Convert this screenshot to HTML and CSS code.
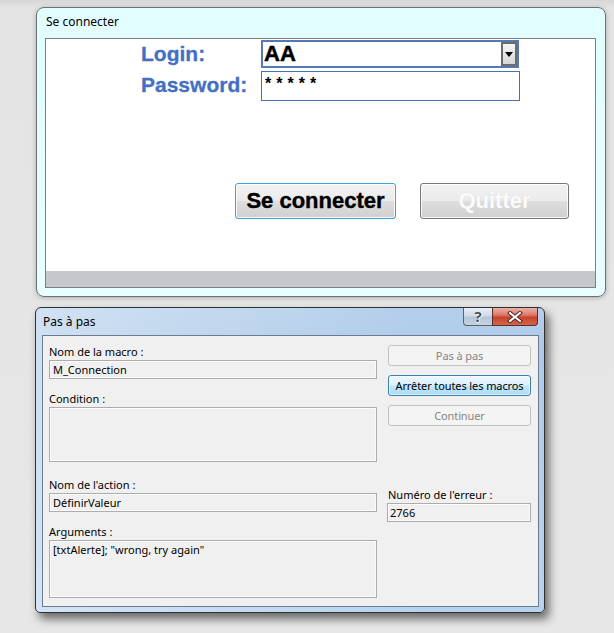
FILE: index.html
```html
<!DOCTYPE html>
<html lang="fr">
<head>
<meta charset="utf-8">
<title>Se connecter</title>
<link rel="stylesheet" href="styles.css">
</head>
<body>
<div class="page">
  <div class="win1">
    <div class="win1-title">Se connecter</div>
    <div class="client">
      <div class="form">
        <div class="lbl lbl-login">Login:</div>
        <div class="combo">
          <span class="combo-val">AA</span>
          <span class="dd"><svg width="8" height="5" viewBox="0 0 8 5"><path d="M0 0h8L4 5z" fill="#000"/></svg></span>
        </div>
        <div class="lbl lbl-pass">Password:</div>
        <div class="pass">* * * * *</div>
      </div>
      <div class="actions">
        <div class="btn btn-connect">Se connecter</div>
        <div class="btn btn-quit">Quitter</div>
      </div>
      <div class="statusbar"></div>
    </div>
  </div>

  <div class="win2">
    <div class="titlebar">
      <div class="title2">Pas à pas</div>
      <div class="tb-help">?</div>
      <div class="tb-close"><svg width="16" height="12" viewBox="0 0 16 12"><path d="M3 2L13 10M13 2L3 10" stroke="#4a2620" stroke-width="4" stroke-linecap="square"/><path d="M3 2L13 10M13 2L3 10" stroke="#fff" stroke-width="2" stroke-linecap="square"/></svg></div>
    </div>
    <div class="content">
      <div class="col-left">
        <div class="flabel l1">Nom de la macro :</div>
        <div class="field">M_Connection</div>
        <div class="flabel l2">Condition :</div>
        <div class="field area area1"></div>
        <div class="flabel l3">Nom de l'action :</div>
        <div class="field">DéfinirValeur</div>
        <div class="flabel l4">Arguments :</div>
        <div class="field area area2">[txtAlerte]; "wrong, try again"</div>
      </div>
      <div class="col-right">
        <div class="sbtn disabled">Pas à pas</div>
        <div class="sbtn active">Arrêter toutes les macros</div>
        <div class="sbtn disabled">Continuer</div>
        <div class="flabel l5">Numéro de l'erreur :</div>
        <div class="field err">2766</div>
      </div>
    </div>
  </div>
</div>
</body>
</html>
```

FILE: styles.css
```css
html, body {
  margin: 0;
  padding: 0;
}
body {
  width: 614px;
  height: 633px;
  overflow: hidden;
  background: linear-gradient(#d6d6d6, #e4e4e4 8px, #e7e7e7);
  font-family: "Noto Sans", "Open Sans", sans-serif;
  color: #000;
}
.page {
  padding-top: 7px;
}

/* ---------- top window ---------- */
.win1 {
  margin-left: 36px;
  width: 570px;
  height: 290px;
  box-sizing: border-box;
  border: 1px solid #6c7272;
  border-radius: 8px;
  background: linear-gradient(#e2fdfd, #e9fefe);
  padding: 0 9px 8px 8px;
  display: flex;
  flex-direction: column;
  box-shadow: 0 1px 5px rgba(0, 0, 0, 0.25);
}
.win1-title {
  height: 30px;
  line-height: 28px;
  font-size: 12px;
  padding-left: 1px;
}
.client {
  flex: 1;
  border: 1px solid #7b7f7f;
  background: #fff;
  display: flex;
  flex-direction: column;
}
.form {
  display: grid;
  grid-template-columns: 120px 260px;
  row-gap: 3px;
  margin-left: 95px;
  padding-top: 1px;
}
.lbl {
  font-family: "Liberation Sans", Arial, sans-serif;
  font-weight: bold;
  font-size: 21px;
  color: #4470c2;
  line-height: 24px;
  -webkit-text-stroke: 0.3px #4470c2;
}
.lbl-login {
  align-self: center;
}
.lbl-pass {
  margin-top: 2px;
}
.combo {
  width: 258px;
  height: 28px;
  box-sizing: border-box;
  border: 2px solid #5578b6;
  display: flex;
  align-items: center;
  justify-content: space-between;
}
.combo-val {
  font-family: "Liberation Sans", Arial, sans-serif;
  font-weight: bold;
  font-size: 22px;
  line-height: 24px;
  padding-left: 1px;
  -webkit-text-stroke: 0.5px #000;
}
.dd {
  width: 16px;
  height: 24px;
  box-sizing: border-box;
  border: 2px solid #6c6c6c;
  background: linear-gradient(#f6f6f6, #e6e6e6 50%, #d6d6d6);
  display: flex;
  align-items: center;
  justify-content: center;
}
.pass {
  width: 259px;
  height: 30px;
  box-sizing: border-box;
  border: 1px solid #4a6eb2;
  font-family: "Liberation Sans", Arial, sans-serif;
  font-weight: bold;
  font-size: 16px;
  line-height: 18px;
  padding: 3px 0 0 3px;
  letter-spacing: 0.3px;
}
.actions {
  display: flex;
  gap: 24px;
  margin: 82px 0 0 189px;
}
.btn {
  height: 36px;
  box-sizing: border-box;
  border-radius: 3px;
  font-family: "Liberation Sans", Arial, sans-serif;
  font-weight: bold;
  font-size: 22px;
  line-height: 34px;
  text-align: center;
  background: linear-gradient(#f2f2f2, #ebebeb 48%, #dddddd 52%, #d0d0d0);
  box-shadow: inset 0 0 0 1px rgba(255, 255, 255, 0.8);
}
.btn-connect {
  width: 161px;
  border: 1px solid #38a8dc;
  color: #000;
  -webkit-text-stroke: 0.4px #000;
}
.btn-quit {
  width: 149px;
  border: 1px solid #777;
  color: #fbfbfb;
  text-shadow: 0 0 1px rgba(200, 200, 200, 0.6);
}
.statusbar {
  margin-top: auto;
  height: 16px;
  background: #c6c7cb;
}

/* ---------- bottom dialog ---------- */
.win2 {
  margin: 10px 0 0 35px;
  width: 510px;
  height: 306px;
  box-sizing: border-box;
  border: 1px solid #2c3135;
  border-radius: 6px 6px 5px 5px;
  background:
    linear-gradient(to right, rgba(255, 255, 255, 0.38), rgba(255, 255, 255, 0) 75%),
    linear-gradient(#b4cfeb, #afcbe9 40px, #b9d3ee);
  box-shadow: 4px 6px 10px rgba(0, 0, 0, 0.55);
  padding: 0 5px 5px 6px;
  display: flex;
  flex-direction: column;
}
.titlebar {
  height: 27px;
  display: flex;
  align-items: flex-start;
}
.title2 {
  flex: 1;
  font-size: 12px;
  line-height: 27px;
  padding-left: 1px;
}
.tb-help {
  width: 29px;
  height: 18px;
  box-sizing: border-box;
  border: 1px solid #5a636e;
  border-top: none;
  border-right: none;
  border-radius: 0 0 0 4px;
  background: linear-gradient(#e6edf5, #d0dbe7 45%, #b7c6d7 55%, #c5d3e1);
  font-size: 15px;
  font-weight: bold;
  line-height: 17px;
  text-align: center;
  color: #46505c;
  text-shadow: 0 1px 0 #fff, 1px 0 0 #fff;
}
.tb-close {
  width: 46px;
  height: 18px;
  margin-right: 1px;
  box-sizing: border-box;
  border: 1px solid #5e2d25;
  border-top: none;
  border-radius: 0 0 4px 0;
  background: linear-gradient(#eab0a4, #dc7c6a 40%, #c8432f 55%, #d3644a);
  display: flex;
  align-items: center;
  justify-content: center;
}
.content {
  flex: 1;
  border: 1px solid #6c7c90;
  background: #f0f0f0;
  display: flex;
  font-size: 11px;
  color: #000;
}
.col-left {
  width: 328px;
  margin-left: 6px;
  padding-top: 8px;
  display: flex;
  flex-direction: column;
}
.col-right {
  width: 144px;
  margin-left: 10px;
  padding-top: 9px;
  display: flex;
  flex-direction: column;
}
.flabel {
  height: 16px;
  line-height: 16px;
  white-space: nowrap;
}
.l2 { margin-top: 12px; }
.l3 { margin-top: 15px; }
.l4 { margin-top: 12px; }
.l5 { margin-top: 61px; margin-left: 1px; }
.field {
  height: 19px;
  box-sizing: border-box;
  border: 1px solid #acacac;
  box-shadow: inset 0 0 0 1px #fbfbfb;
  padding: 0 3px;
  line-height: 17px;
  white-space: nowrap;
}
.area {
  line-height: 15px;
  padding-top: 1px;
}
.area1 { height: 55px; }
.area2 { height: 58px; }
.err {
  width: 144px;
  padding-left: 2px;
}
.sbtn {
  width: 143px;
  height: 21px;
  margin-left: 1px;
  box-sizing: border-box;
  border-radius: 3px;
  text-align: center;
  line-height: 19px;
  white-space: nowrap;
  letter-spacing: -0.1px;
}
.sbtn + .sbtn {
  margin-top: 9px;
}
.disabled {
  border: 1px solid #c1c1c1;
  background: #f4f4f4;
  color: #858585;
}
.active {
  border: 1px solid #3c7fb1;
  background: linear-gradient(#ecf7fd, #dcf1fc 48%, #c2e7fb 52%, #acdcf5);
  box-shadow: inset 0 0 0 1px rgba(255, 255, 255, 0.6);
  color: #000;
}
```
